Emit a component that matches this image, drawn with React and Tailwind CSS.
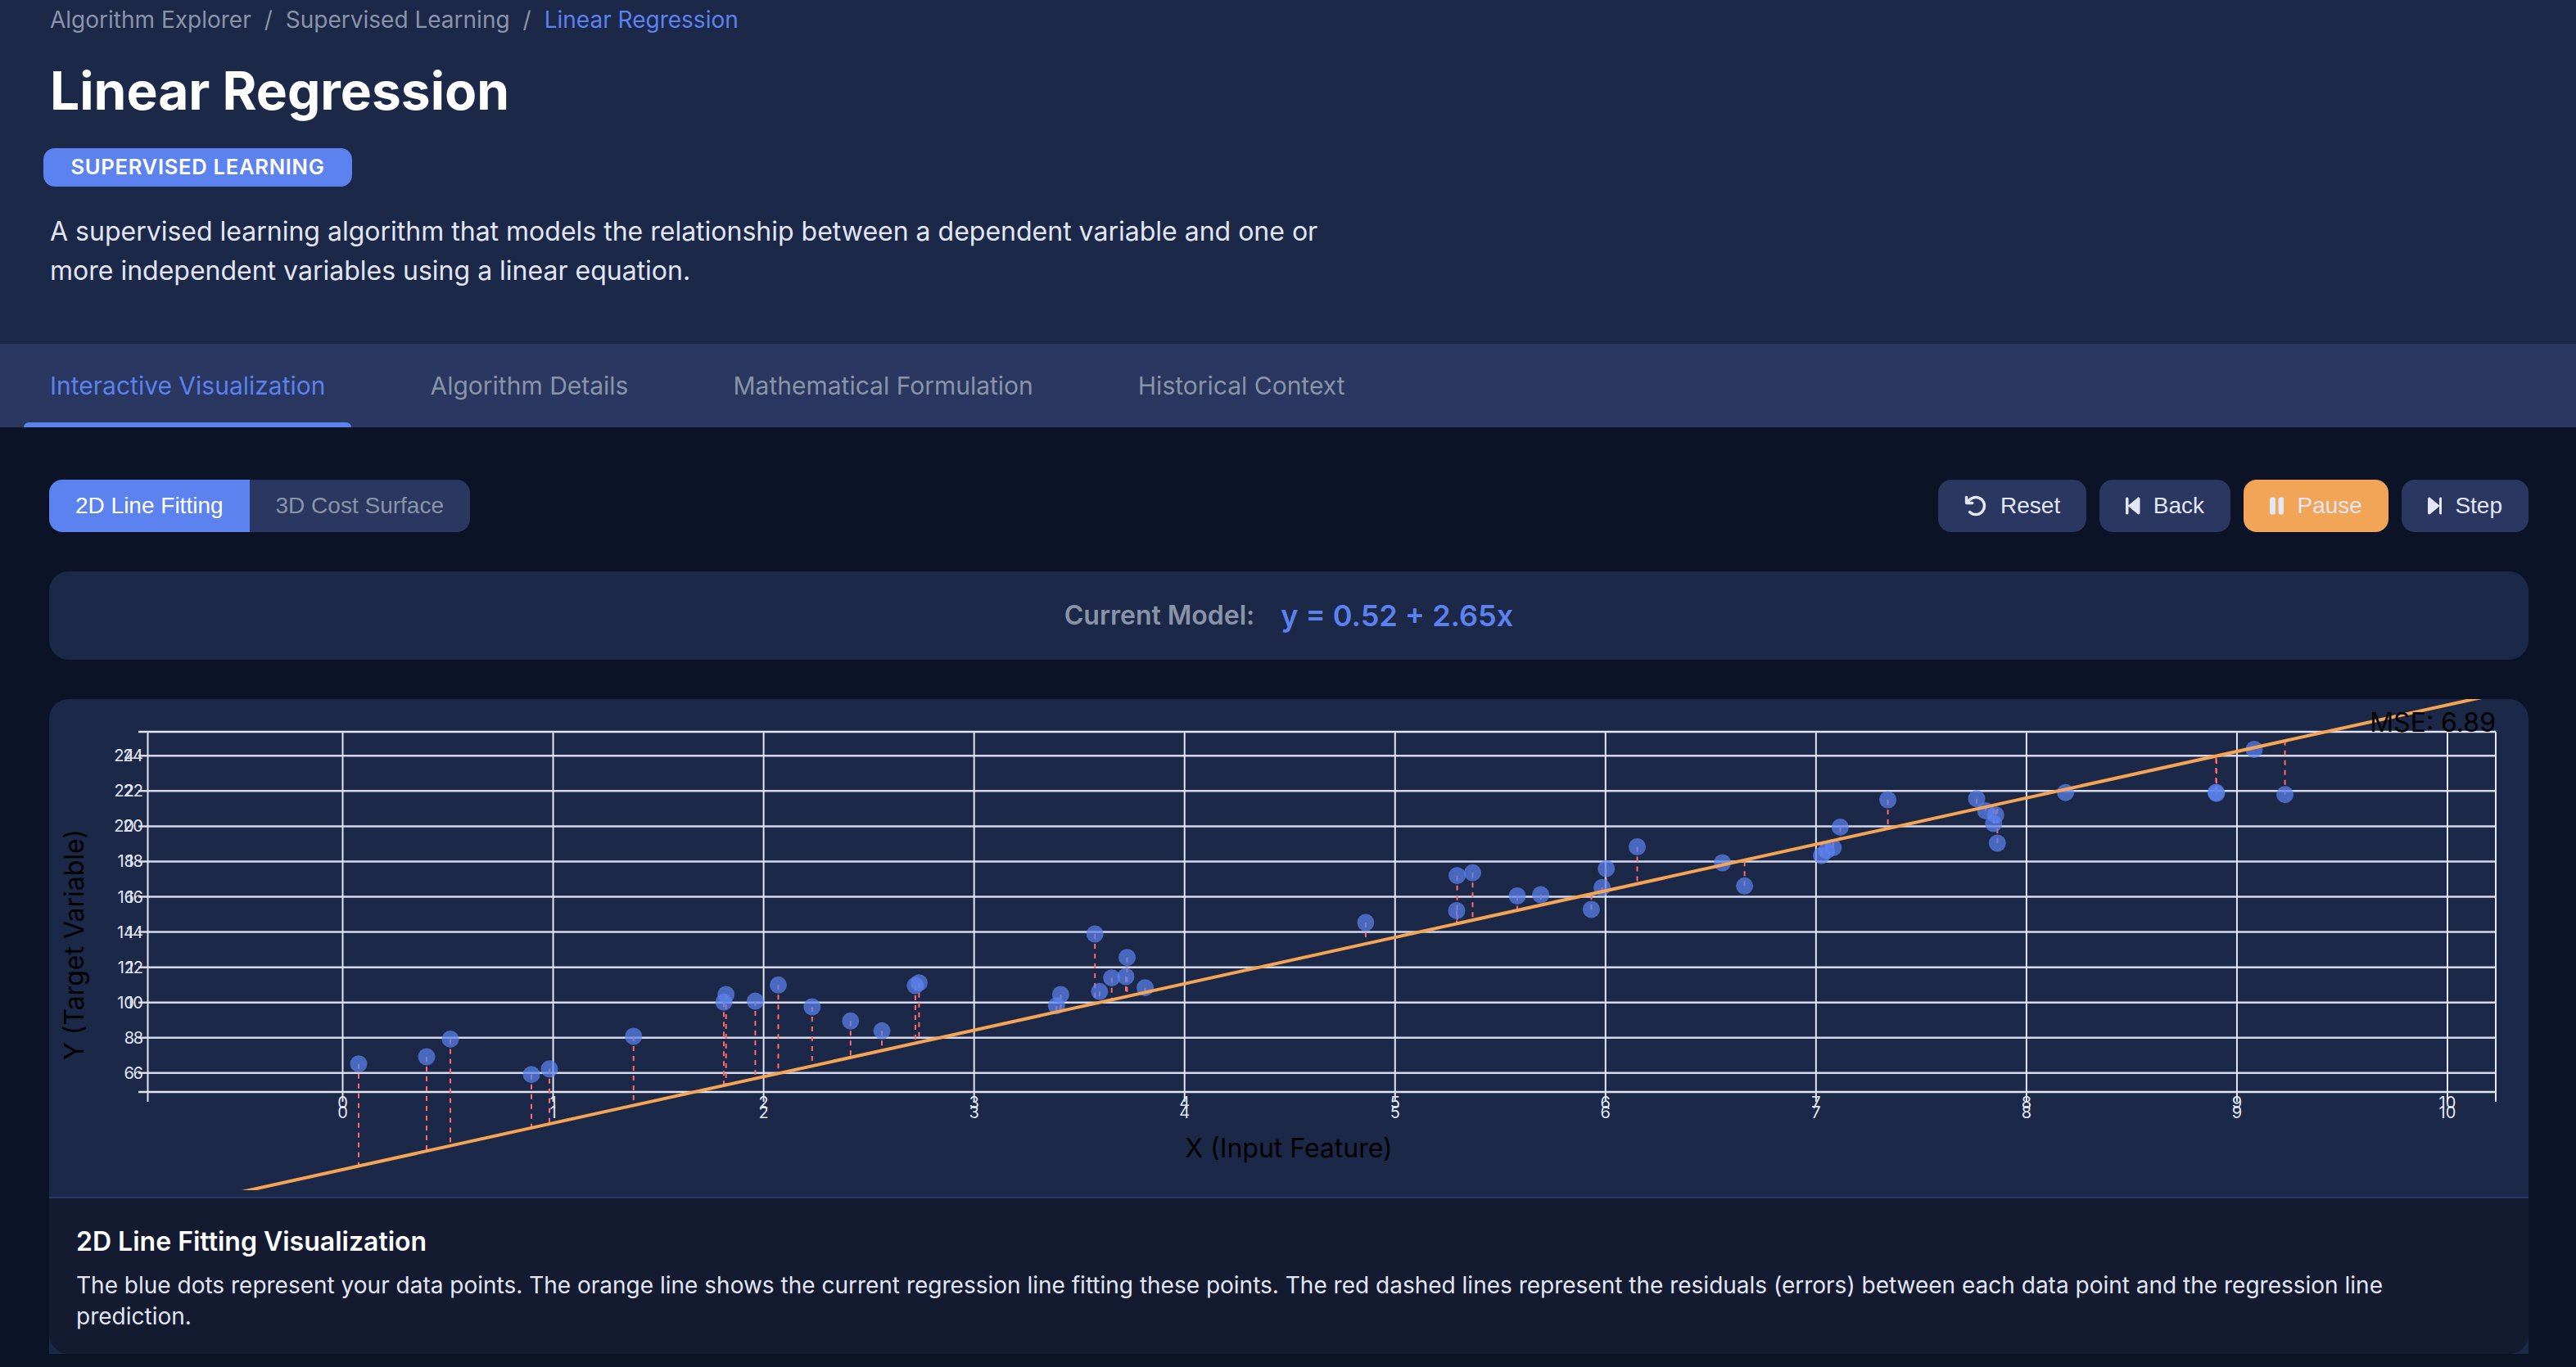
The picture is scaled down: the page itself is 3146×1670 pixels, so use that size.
import React from 'react';
import { FaArrowRotateLeft, FaBackwardStep, FaForwardStep, FaPause } from 'react-icons/fa6';

// plot geometry, in page pixels
const X0 = 418.5;
const X_STEP = 257.05;
const Y0 = 1440;
const Y_STEP = 21.53;
const sx = (v) => X0 + X_STEP * v;
const sy = (v) => Y0 - Y_STEP * v;
const lineAt = (px) => 1466 - 0.2208 * (px - 250);

const points = [
  [438, 1299.7], [521, 1291], [550, 1269.4], [649, 1312.7], [671, 1305.8], [773.7, 1266],
  [886.7, 1215], [884, 1224.3], [922.4, 1223], [950.5, 1203.3], [991.8, 1230], [1038.8, 1247.3],
  [1077, 1259.3], [1117.9, 1204], [1122.4, 1200.7], [1290.3, 1228.7], [1295.4, 1215], [1337.2, 1141],
  [1342.9, 1211.3], [1357.7, 1194.7], [1375, 1193], [1376.5, 1169.7], [1398.5, 1206.7],
  [1667.9, 1127], [1779, 1112.5], [1779.6, 1069.7], [1798.5, 1066.2], [1853, 1094.5], [1881.6, 1093],
  [1943.4, 1111], [1956.6, 1084.2], [1961.7, 1061.2], [1999.5, 1034.5], [2103.6, 1054], [2130.6, 1082.3],
  [2224.5, 1045.2], [2230.6, 1039.4], [2238.8, 1035.6], [2247.4, 1010.4], [2305.6, 977],
  [2414, 975.7], [2425, 990.4], [2437.3, 995.4], [2434.8, 1006], [2439.3, 1030], [2522.6, 968.2],
  [2706.4, 967.9], [2706.9, 969.3], [2753, 915.4], [2790.6, 970.7],
];

const xTicks = [0, 1, 2, 3, 4, 5, 6, 7, 8, 9, 10];
const yTicks = [6, 8, 10, 12, 14, 16, 18, 20, 22, 24];

const Chart = () => (
  <svg viewBox="60 854 3028 600" className="block w-full h-[600px]" fontFamily="Inter, sans-serif">
    {/* grid + axes */}
    {yTicks.map((t) => (
      <line key={t} x1="169" x2="3048" y1={sy(t)} y2={sy(t)} stroke="#d5d9ea" strokeWidth="2.5" />
    ))}
    {xTicks.map((t) => (
      <line key={t} x1={sx(t)} x2={sx(t)} y1="894" y2="1346" stroke="#e2e6f5" strokeWidth="2" />
    ))}
    <path d="M169 894H3048M169 1334H3048" stroke="#e2e6f5" strokeWidth="2.5" fill="none" />
    <path d="M180.500 894V1346M3048 894V1346" stroke="#e2e6f5" strokeWidth="2" fill="none" />

    {/* tick labels, the axis is drawn twice */}
    {yTicks.map((t) => (
      <g key={t} fill="#e2e6f5" fontSize="20" textAnchor="end">
        <text x="175" y={sy(t) + 7}>{t}</text>
        <text x="164" y={sy(t) + 7}>{t}</text>
      </g>
    ))}
    {xTicks.map((t) => (
      <g key={t} fill="#e2e6f5" fontSize="20" textAnchor="middle">
        <text x={sx(t)} y="1354">{t}</text>
        <text x={sx(t)} y="1366">{t}</text>
      </g>
    ))}

    {/* residuals */}
    {points.map(([x, y], i) => (
      <line key={i} x1={x} x2={x} y1={y} y2={lineAt(x)} stroke="#ff6b6b" strokeWidth="2" strokeDasharray="6 6" />
    ))}

    {points.map(([x, y], i) => (
      <circle key={i} cx={x} cy={y} r="10.5" fill="#5b82ee" fillOpacity="0.72" />
    ))}

    {/* regression line sits on top of the dots */}
    <line x1="250" y1={lineAt(250)} x2="3040" y2={lineAt(3040)} stroke="#f6a555" strokeWidth="4" />

    <text x="3048" y="894" fontSize="32" textAnchor="end" fill="#000">MSE: 6.89</text>
    <text x="1574" y="1414" fontSize="32" textAnchor="middle" fill="#000">X (Input Feature)</text>
    <text x="102" y="1154" fontSize="32" textAnchor="middle" fill="#000" transform="rotate(-90 102 1154)">Y (Target Variable)</text>
  </svg>
);

const PlayButton = ({ icon: Icon, label, iconClass, active }) => (
  <button className={`h-16 px-8 flex items-center gap-4 rounded-2xl text-[28px] font-['Liberation_Sans'] text-[#e2e6f5] ${active ? 'bg-[#f2a556]' : 'bg-[#2a3760]'}`}>
    <Icon className={iconClass} />
    {label}
  </button>
);

export default function App() {
  return (
    <div className="min-h-[1670px] bg-[#0d1326] font-['Inter'] text-white">
      {/* header */}
      <header className="h-[420px] bg-[#1c2848] pl-[61px] pr-[58px]">
        <div className="pt-[4px] flex gap-4 text-[28px] leading-[40px] text-[#8a94a8]">
          <span>Algorithm Explorer</span>
          <span>/</span>
          <span>Supervised Learning</span>
          <span>/</span>
          <span className="text-[#5b82ee]">Linear Regression</span>
        </div>
        <h1 className="mt-[29px] text-[64px] leading-[76px] font-bold">Linear Regression</h1>
        <span className="mt-[32px] -ml-[8px] h-[47px] w-[377px] flex items-center justify-center rounded-[14px] bg-[#5b82ee] text-[25.6px] tracking-[0.7px] font-semibold">
          SUPERVISED LEARNING
        </span>
        <p className="mt-[31px] w-[1600px] text-[32px] leading-[47.500px] text-[#e2e6f5]">
          A supervised learning algorithm that models the relationship between a dependent variable and one or more independent variables using a linear equation.
        </p>
      </header>

      {/* tabs */}
      <nav className="h-[102px] bg-[#2a3760] pl-[29px] flex gap-16 text-[30px] text-[#8a94a8]">
        <div className="relative px-8 flex items-center text-[#5b82ee]">
          Interactive Visualization
          <div className="absolute left-0 right-0 bottom-0 h-[6px] rounded-t-md bg-[#5b82ee]" />
        </div>
        <div className="px-8 flex items-center">Algorithm Details</div>
        <div className="px-8 flex items-center">Mathematical Formulation</div>
        <div className="px-8 flex items-center">Historical Context</div>
      </nav>

      <main className="pl-[60px] pr-[58px] pt-[64px]">
        <div className="flex justify-between">
          <div className="flex h-16 rounded-2xl overflow-hidden font-['Liberation_Sans'] text-[28px]">
            <button className="px-8 bg-[#5b82ee] text-white">2D Line Fitting</button>
            <button className="px-8 bg-[#2a3760] text-[#8a94a8]">3D Cost Surface</button>
          </div>
          <div className="flex gap-4">
            <PlayButton icon={FaArrowRotateLeft} label="Reset" iconClass="w-[28px] h-[28px]" />
            <PlayButton icon={FaBackwardStep} label="Back" iconClass="w-[17.5px] h-[28px]" />
            <PlayButton icon={FaPause} label="Pause" iconClass="w-[17.5px] h-[28px]" active />
            <PlayButton icon={FaForwardStep} label="Step" iconClass="w-[17.5px] h-[28px]" />
          </div>
        </div>

        {/* current model */}
        <div className="mt-[48px] h-[108px] rounded-3xl bg-[#1c2848] flex items-center justify-center gap-8">
          <span className="text-[32px] font-semibold text-[#8a94a8]">Current Model:</span>
          <span className="text-[36px] font-semibold text-[#5b82ee]">y = 0.52 + 2.65x</span>
        </div>

        {/* chart card */}
        <div className="mt-[48px] rounded-t-3xl bg-[#1c2848]">
          <div className="pb-[8px] border-b-2 border-[#2a3760]">
            <Chart />
          </div>
          <div className="h-[190px] rounded-b-3xl bg-[#141a30] pl-[33px] pr-8 pt-[34px]">
            <h3 className="text-[32px] leading-[38px] font-semibold">2D Line Fitting Visualization</h3>
            <p className="mt-[15px] text-[28px] leading-[38px] text-[#e2e6f5]">
              The blue dots represent your data points. The orange line shows the current regression line fitting these points. The red dashed lines represent the residuals (errors) between each data point and the regression line prediction.
            </p>
          </div>
        </div>
      </main>
    </div>
  );
}
